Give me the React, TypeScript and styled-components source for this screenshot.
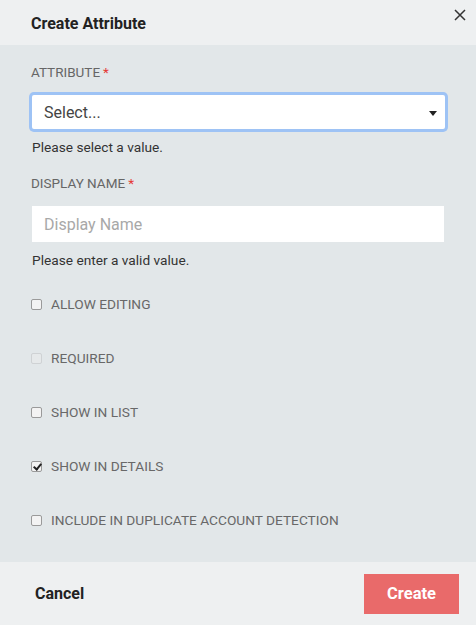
import styled, { createGlobalStyle } from "styled-components";

const GlobalStyle = createGlobalStyle`
    html, body {
        margin: 0;
        padding: 0;
    }
    body {
        font-family: Roboto, "Liberation Sans", sans-serif;
        background: #e2e7e9;
    }
`

const Modal = styled.div`
    width: 476px;
    height: 625px;
    display: flex;
    flex-direction: column;
    background: #e2e7e9;
`

const Header = styled.header`
    height: 45px;
    flex-shrink: 0;
    background: #eef0f1;
    display: flex;
    align-items: flex-start;
    justify-content: space-between;
    padding: 0 8px 0 31px;
    box-sizing: border-box;
    h2 {
        margin: 14px 0 0;
        font-size: 16px;
        font-weight: 700;
        color: #222;
    }
`

const CloseButton = styled.button`
    background: none;
    border: none;
    padding: 0;
    margin-top: 7px;
    width: 16px;
    height: 16px;
    cursor: pointer;
    color: #333;
`

const Body = styled.div`
    flex: 1;
    min-height: 0;
    padding: 21px 31px 0 31px;
    display: flex;
    flex-direction: column;
`

const Label = styled.label`
    font-size: 13.5px;
    color: #666;
    text-transform: uppercase;
    line-height: 15px;
    margin-top: -1px;
    > span {
        color: #e53935;
        margin-left: 3px;
    }
`

const SelectBox = styled.div`
    margin: 15px 0 0 1px;
    height: 34px;
    background: #fff;
    border-radius: 2px;
    box-shadow: 0 0 0 3px #9ec3f5;
    display: flex;
    align-items: center;
    justify-content: space-between;
    padding: 0 8px 0 12px;
    font-size: 16px;
    color: #444;
`

const Caret = styled.span`
    width: 0;
    height: 0;
    border-left: 4px solid transparent;
    border-right: 4px solid transparent;
    border-top: 5px solid #222;
    margin-top: 2px;
`

const TextInput = styled.input`
    margin: 15px 0 0 1px;
    height: 36px;
    width: 412px;
    box-sizing: border-box;
    border: none;
    outline: none;
    background: #fff;
    padding: 0 12px;
    font-family: inherit;
    font-size: 16px;
    color: #333;
    &::placeholder {
        color: #a8a8a8;
    }
`

const Hint = styled.p<{ $gap: number }>`
    margin: ${({ $gap }) => $gap}px 0 0 1px;
    font-size: 13.7px;
    color: #333;
    line-height: 16px;
`

const NextLabel = styled.div`
    margin-top: 22px;
    display: flex;
`

const CheckList = styled.div`
    margin-top: 28px;
    display: flex;
    flex-direction: column;
    gap: 38px;
`

const CheckRow = styled.label<{ $disabled?: boolean }>`
    display: flex;
    align-items: center;
    gap: 9px;
    height: 16px;
    font-size: 13.7px;
    text-transform: uppercase;
    color: #686868;
    input {
        appearance: none;
        margin: 0;
        width: 11px;
        height: 11px;
        box-sizing: border-box;
        border: 1px solid ${({ $disabled }) => ($disabled ? "#cfd2d4" : "#9a9a9a")};
        border-radius: 2px;
        background: ${({ $disabled }) => ($disabled ? "#e6e9ea" : "#f3f3f3")};
        position: relative;
    }
    input:checked::after {
        content: "";
        position: absolute;
        left: 3px;
        top: 0px;
        width: 3px;
        height: 6px;
        border: solid #222;
        border-width: 0 2px 2px 0;
        transform: rotate(40deg);
    }
`

const Footer = styled.footer`
    height: 63px;
    flex-shrink: 0;
    background: #eef0f1;
    display: flex;
    align-items: center;
    justify-content: space-between;
    padding: 0 17px 0 35px;
`

const CancelButton = styled.button`
    background: none;
    border: none;
    padding: 0;
    font-family: inherit;
    font-size: 16px;
    font-weight: 700;
    color: #222;
    cursor: pointer;
`

const CreateButton = styled.button`
    width: 95px;
    height: 40px;
    background: #e96a6a;
    border: none;
    color: #fff;
    font-family: inherit;
    font-size: 16.5px;
    font-weight: 700;
    cursor: pointer;
`

const options = [
    { label: "Allow Editing", checked: false },
    { label: "Required", checked: false, disabled: true },
    { label: "Show in List", checked: false },
    { label: "Show in Details", checked: true },
    { label: "Include in Duplicate Account Detection", checked: false },
];

const App = () => {
    return (
        <>
            <GlobalStyle />
            <Modal>
                <Header>
                    <h2>Create Attribute</h2>
                    <CloseButton aria-label="Close">
                        <svg width="16" height="16" viewBox="0 0 16 16">
                            <path d="M3 3 L13 13 M13 3 L3 13" stroke="#333" strokeWidth="1.5" />
                        </svg>
                    </CloseButton>
                </Header>
                <Body>
                    <Label>Attribute<span>*</span></Label>
                    <SelectBox>
                        Select...
                        <Caret />
                    </SelectBox>
                    <Hint $gap={10}>Please select a value.</Hint>
                    <NextLabel>
                        <Label>Display Name<span>*</span></Label>
                    </NextLabel>
                    <TextInput placeholder="Display Name" />
                    <Hint $gap={10}>Please enter a valid value.</Hint>
                    <CheckList>
                        {options.map((opt) => (
                            <CheckRow key={opt.label} $disabled={opt.disabled}>
                                <input type="checkbox" defaultChecked={opt.checked} disabled={opt.disabled} />
                                {opt.label}
                            </CheckRow>
                        ))}
                    </CheckList>
                </Body>
                <Footer>
                    <CancelButton>Cancel</CancelButton>
                    <CreateButton>Create</CreateButton>
                </Footer>
            </Modal>
        </>
    );
}

export default App;
